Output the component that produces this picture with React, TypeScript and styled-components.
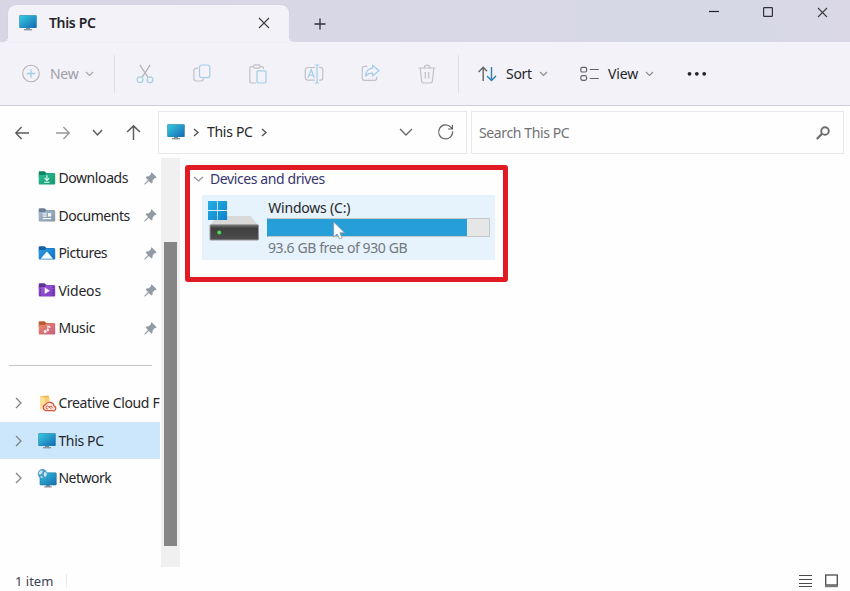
import React from "react";
import styled, { createGlobalStyle } from "styled-components";

const Global = createGlobalStyle`
  *, *::before, *::after { box-sizing: border-box; }
  body { margin: 0; background: #fefefe; font-family: "Noto Sans", "Open Sans", sans-serif; overflow: hidden; }
  svg { display: block; flex: none; overflow: visible; }
`;

const Window = styled.main`
  width: 850px;
  height: 591px;
  display: flex;
  flex-direction: column;
  background: #fefefe;
  color: #262628;
  overflow: hidden;
`;

const Label = styled.span<{ $width: number; $size?: number; $color?: string; $spacing?: number; $weight?: number }>`
  flex: none;
  width: ${(p) => p.$width}px;
  font-size: ${(p) => p.$size ?? 14}px;
  line-height: 20px;
  font-weight: ${(p) => p.$weight ?? 400};
  letter-spacing: ${(p) => p.$spacing ?? -0.3}px;
  color: ${(p) => p.$color ?? "#262628"};
  white-space: nowrap;
`;

/* Title bar */
const TitleBar = styled.header`
  height: 42px;
  flex: none;
  display: flex;
  align-items: flex-end;
  padding-left: 8px;
  background: linear-gradient(90deg, #d8d6e5, #d9d8e6 55%, #d6d8e6 85%, #dad8e6);
`;

const Tab = styled.div`
  position: relative;
  width: 281px;
  height: 37px;
  display: flex;
  align-items: center;
  padding: 0 20px 2px 11px;
  background: #f3f2f8;
  border-radius: 8px 8px 0 0;
  box-shadow: 0 0 1px #bdbccb;
  &::before, &::after {
    content: "";
    position: absolute;
    bottom: 0;
    width: 5px;
    height: 5px;
  }
  &::before { left: -5px; background: radial-gradient(circle at 0 0, transparent 5px, #f3f2f8 5px); }
  &::after { right: -5px; background: radial-gradient(circle at 100% 0, transparent 5px, #f3f2f8 5px); }
`;

const TabTitle = styled.div`
  flex: 1;
  display: flex;
  padding: 1px 0 0 12px;
`;

const NewTab = styled.div`
  width: 61px;
  height: 37px;
  display: grid;
  place-items: center;
`;

const WindowControls = styled.div`
  align-self: flex-start;
  margin-left: auto;
  display: grid;
  grid-template-columns: repeat(3, 54.5px);
  place-items: center;
  height: 24px;
`;

/* Command bar */
const CommandBar = styled.div`
  height: 64px;
  flex: none;
  display: flex;
  align-items: center;
  background: #f3f2f8;
  border-bottom: 1.5px solid #d0cfd6;
`;

const MenuButton = styled.div<{ $width: number; $inset: number }>`
  width: ${(p) => p.$width}px;
  height: 40px;
  padding-left: ${(p) => p.$inset}px;
  display: flex;
  align-items: center;
  gap: 9px;
  flex: none;
`;

const Separator = styled.i`
  width: 1px;
  height: 38px;
  background: #e1e0e7;
  flex: none;
`;

const Tools = styled.div`
  width: 343px;
  padding: 0 2.3px 0 2px;
  display: grid;
  grid-template-columns: repeat(6, 56.4px);
  justify-items: center;
`;

/* Navigation row */
const NavRow = styled.div`
  height: 52px;
  flex: none;
  display: flex;
  align-items: flex-start;
  padding-top: 5px;
`;

const NavButtons = styled.nav`
  width: 158px;
  height: 43px;
  display: flex;
  align-items: center;
  padding-left: 15px;
`;

const NavButton = styled.div<{ $width: number }>`
  width: ${(p) => p.$width}px;
  display: flex;
`;

const Field = styled.div<{ $width: number }>`
  width: ${(p) => p.$width}px;
  height: 43px;
  display: flex;
  align-items: center;
  border: 1px solid #e8e8ea;
  background: #fefefe;
`;

const AddressField = styled(Field)`
  padding: 0 12px 1px 8px;
  gap: 9px;
  margin-right: 4px;
`;

const SearchField = styled(Field)`
  padding: 0 13px 0 7px;
  justify-content: space-between;
`;

const AddressActions = styled.div`
  margin-left: auto;
  display: flex;
  align-items: center;
  gap: 26px;
`;

/* Body */
const Body = styled.div`
  flex: 1;
  min-height: 0;
  display: flex;
`;

const Sidebar = styled.aside`
  width: 161px;
  padding-top: 1.25px;
  flex: none;
`;

const SideRow = styled.div<{ $selected?: boolean }>`
  width: 160px;
  height: 37.5px;
  display: flex;
  align-items: center;
  overflow: hidden;
  background: ${(p) => (p.$selected ? "#cce6fc" : "transparent")};
`;

const ChevronSlot = styled.div`
  width: 38px;
  padding-left: 16px;
  flex: none;
`;

const IconSlot = styled.div`
  width: 20.4px;
  flex: none;
`;

const PinSlot = styled.div`
  margin: 0 3px 0 auto;
`;

const SideDivider = styled.div`
  height: 37.5px;
  padding: 18px 9px 0 9px;
  &::after {
    content: "";
    display: block;
    height: 1px;
    background: #c4c4c6;
  }
`;

const ScrollTrack = styled.div`
  width: 19px;
  height: 409px;
  flex: none;
  padding: 84px 3px 0;
  background: #f0f0f0;
`;

const ScrollThumb = styled.div`
  width: 13px;
  height: 304px;
  background: #858585;
`;

const Content = styled.section`
  position: relative;
  flex: 1;
  padding: 11px 0 0 14px;
`;

const Highlight = styled.div`
  position: absolute;
  left: 5px;
  top: 7px;
  width: 323px;
  height: 117px;
  border: 5px solid #e01b24;
  border-radius: 3px;
`;

const GroupHeader = styled.div`
  display: flex;
  align-items: center;
  gap: 7px;
  height: 20px;
`;

const DriveTile = styled.article`
  position: relative;
  width: 293px;
  height: 65px;
  margin: 6px 0 0 8px;
  padding: 3px 5px 0 5px;
  display: flex;
  background: #e6f3fd;
`;

const DriveInfo = styled.div`
  margin-left: auto;
  width: 223px;
  display: flex;
  flex-direction: column;
`;

const UsageBar = styled.div`
  width: 223px;
  height: 19px;
  margin: 0 0 1px;
  border: 1px solid #c5c7c9;
  border-left-color: #269fd9;
  background: #e6e6e7;
  &::before {
    content: "";
    display: block;
    width: 199px;
    height: 17px;
    background: #269fd9;
  }
`;

const Pointer = styled.div`
  position: absolute;
  left: 131px;
  top: 26px;
`;

const StatusBar = styled.footer`
  height: 24px;
  flex: none;
  display: flex;
  align-items: center;
  padding: 4px 12px 0 15px;
`;

const StatusDivider = styled.i`
  width: 1px;
  height: 14px;
  margin-left: 12px;
  background: #ebebed;
`;

const ViewModes = styled.div`
  margin-left: auto;
  display: flex;
  align-items: center;
  gap: 13px;
`;

type ChevronProps = { w?: number; h?: number; color?: string; stroke?: number };

const ChevronDown = ({ w = 7, h = 3.5, color = "#8b8b90", stroke = 1.1 }: ChevronProps) => (
  <svg width={w} height={h} fill="none" stroke={color} strokeWidth={stroke}>
    <path d={`M0 0L${w / 2} ${h}L${w} 0`} />
  </svg>
);

const ChevronRight = ({ w = 4, h = 7, color = "#555", stroke = 1.4 }: ChevronProps) => (
  <svg width={w} height={h} fill="none" stroke={color} strokeWidth={stroke}>
    <path d={`M0 0L${w} ${h / 2}L0 ${h}`} />
  </svg>
);

const Monitor = ({ id }: { id: string }) => (
  <svg width="18" height="16" viewBox="0 0 18 16">
    <defs>
      <linearGradient id={id} x1="0" y1="0" x2="1" y2="1">
        <stop offset="0" stopColor="#35cbe0" />
        <stop offset="1" stopColor="#1669b4" />
      </linearGradient>
    </defs>
    <path d="M7 12h4v2.5H7z" fill="#7b8c99" />
    <path d="M5 14h8v1.4H5z" fill="#8a969f" />
    <rect x=".3" y=".3" width="17.4" height="12.8" rx=".8" fill="#2482ab" />
    <rect x=".8" y=".8" width="16.4" height="11.8" fill={`url(#${id})`} />
  </svg>
);

const Cross = ({ size = 10 }: { size?: number }) => (
  <svg width={size} height={size} stroke="#3c3c41" strokeWidth="1.1">
    <path d={`M0 0L${size} ${size}M${size} 0L0 ${size}`} />
  </svg>
);

const gray = "#c0c0c6";
const blue = "#a3cee7";

const CutIcon = () => (
  <svg width="18" height="20" viewBox="0 0 18 20" fill="none" strokeWidth="1.2">
    <path d="M3.8 .8L11.8 13.2M14.2 .8L6.2 13.2" stroke="#b2b2b8" />
    <circle cx="4" cy="15.8" r="2.9" stroke={blue} />
    <circle cx="14" cy="15.8" r="2.9" stroke={blue} />
  </svg>
);

const CopyIcon = () => (
  <svg width="18" height="18" viewBox="0 0 18 18" fill="none" strokeWidth="1.2">
    <path d="M5 4.2H3.3A2.4 2.4 0 0 0 .9 6.6v8A2.4 2.4 0 0 0 3.3 17h4.8a2.4 2.4 0 0 0 2.4-2.2" stroke={gray} />
    <rect x="6.5" y="1" width="10.3" height="12.6" rx="2.2" stroke={blue} />
  </svg>
);

const PasteIcon = () => (
  <svg width="18" height="20" viewBox="0 0 18 20" fill="none" strokeWidth="1.2">
    <path d="M4.5 2.6H2.4A1.5 1.5 0 0 0 .9 4.1v13.4A1.5 1.5 0 0 0 2.4 19H7M11 2.6h2a1.5 1.5 0 0 1 1.5 1.5V5" stroke={gray} />
    <rect x="4.5" y=".9" width="6.5" height="3.2" rx="1.4" stroke={gray} />
    <rect x="8" y="6.8" width="9" height="12.2" rx="1.2" stroke={blue} />
  </svg>
);

const RenameIcon = () => (
  <svg width="20" height="20" viewBox="0 0 20 20" fill="none" strokeWidth="1.2">
    <path d="M11 3.5H4A2.8 2.8 0 0 0 1.2 6.3v7A2.8 2.8 0 0 0 4 16.1h7M15 3.5h1.5a2.3 2.3 0 0 1 2.3 2.3v8a2.3 2.3 0 0 1-2.3 2.3H15" stroke={gray} />
    <path d="M4 13.8L7.2 5.7L10.4 13.8M5.2 11.2h4M13 1v18M10.8 1h4.4M10.8 19h4.4" stroke={blue} />
  </svg>
);

const ShareIcon = () => (
  <svg width="19" height="18" viewBox="0 0 19 18" fill="none" strokeWidth="1.2" strokeLinejoin="round">
    <path d="M6.3 2.3H3.6A2.4 2.4 0 0 0 1.2 4.7v9.2a2.4 2.4 0 0 0 2.4 2.4h9.8a2.4 2.4 0 0 0 2.4-2.4v-1.2" stroke={gray} />
    <path d="M11.6 1.2L18 6.7L11.6 12V9.2C8.4 9.1 6.3 10 4.6 12.2C5 7.5 7.5 4.4 11.6 4.1Z" stroke={blue} />
  </svg>
);

const TrashIcon = () => (
  <svg width="18" height="20" viewBox="0 0 18 20" fill="none" stroke={gray} strokeWidth="1.2">
    <path d="M.5 4h17M6.2 4C6.2 .1 11.8 .1 11.8 4M2.2 4l1.4 13.1A2 2 0 0 0 5.6 19h6.8a2 2 0 0 0 2-1.9L15.8 4M7.3 8v6.5M10.7 8v6.5" />
  </svg>
);

const AddIcon = () => (
  <svg width="19" height="19" viewBox="0 0 19 19" fill="none" strokeWidth="1.1">
    <circle cx="9" cy="9.5" r="8.3" stroke="#b2b2b9" />
    <path d="M9 5.2v8.6M4.7 9.5h8.6" stroke={blue} strokeWidth="1.3" />
  </svg>
);

const SortIcon = () => (
  <svg width="19" height="16" viewBox="0 0 19 16" fill="none" strokeWidth="1.4">
    <path d="M5.2 15V1.2M.6 6L5.2 1.2L9 5.2" stroke="#626267" />
    <path d="M13.5 1v13.6M9 10l4.5 4.6L18 10" stroke="#2f7fb9" />
  </svg>
);

const ViewIcon = () => (
  <svg width="19" height="16" viewBox="0 0 19 16" fill="none" stroke="#626267" strokeWidth="1.2">
    <rect x=".8" y="1.4" width="5.8" height="4.6" rx="1.5" />
    <rect x=".8" y="9.7" width="5.8" height="4.6" rx="1.8" />
    <path d="M9.8 3.5h9M9.8 12.5h9" />
  </svg>
);

const MoreIcon = () => (
  <svg width="19" height="5" fill="#27272a">
    <circle cx="1.5" cy="2.8" r="1.9" />
    <circle cx="8.8" cy="2.8" r="1.9" />
    <circle cx="16.2" cy="2.8" r="1.9" />
  </svg>
);

const Arrow = ({ angle = 0, color = "#5c5c60", size = 14 }: { angle?: number; color?: string; size?: number }) => (
  <svg width={size} height={size} viewBox="0 0 14 14" fill="none" stroke={color} strokeWidth="1.35">
    <path d="M14 7H.8M6.6 1L.8 7l5.8 6" transform={`rotate(${angle} 7 7)`} />
  </svg>
);

const RefreshIcon = () => (
  <svg width="16" height="16" viewBox="0 0 16 16" fill="none" stroke="#66666a" strokeWidth="1.2">
    <path d="M14.6 7.2A7 7 0 1 1 12.9 3.3L14.3 5M14.4 .8V5H10" />
  </svg>
);

const SearchIcon = () => (
  <svg width="14" height="14" viewBox="0 0 14 14" fill="none" stroke="#6a6a6d">
    <circle cx="9" cy="5" r="3.8" strokeWidth="1.9" />
    <path d="M6 7.8L.8 13" strokeWidth="2.3" />
  </svg>
);

const PinIcon = () => (
  <svg width="13" height="13" viewBox="0 0 13 13" fill="#929ba3">
    <path d="M7.6 .3L12.6 5.2L11.6 6.2L10.8 5.9L8.6 8.4L8.5 10.8L7.5 11.4L4.8 8.9L1 12.6L.3 12.6L.3 11.8L4 8.1L1.6 5.5L2.3 4.5L4.8 4.3L7.1 2.1L6.8 1.2Z" />
  </svg>
);

type FolderKind = "downloads" | "documents" | "pictures" | "videos" | "music";

const folderColors: Record<FolderKind, [string, string, string]> = {
  downloads: ["#128466", "#2fbd93", "#159874"],
  documents: ["#6b8096", "#a9bccd", "#8095a9"],
  pictures: ["#15609f", "#2a9be6", "#1370be"],
  videos: ["#5e3594", "#a45ae0", "#7a3abf"],
  music: ["#bd5a34", "#e88d60", "#c45d86"],
};

const FolderGlyph = ({ kind }: { kind: FolderKind }) => {
  switch (kind) {
    case "downloads":
      return <path d="M8.7 4.5v5M6.4 7.5l2.3 2.3L11 7.5M6 11.6h5.4" fill="none" stroke="#e9fff8" strokeWidth="1.1" />;
    case "documents":
      return (
        <>
          <path d="M4.5 6.2h4M4.5 8.4h4M4.5 10.9h8.5" fill="none" stroke="#f4f8fb" strokeWidth="1.1" />
          <path d="M9.8 5.4h3.2v3.4H9.8z" fill="#f4f8fb" />
        </>
      );
    case "pictures":
      return <path d="M2.5 13L8.2 6.2a.7.7 0 0 1 1 0L14.8 13z" fill="#f5fbff" />;
    case "videos":
      return (
        <>
          <path d="M2 3.5v9.5M15.2 4v9" stroke="#512a86" strokeWidth="1.4" strokeDasharray="1.4 1.4" />
          <path d="M6.5 4.8L11.7 8L6.5 11.2z" fill="#fbf5ff" />
        </>
      );
    default:
      return (
        <g fill="#fff4f0">
          <circle cx="7" cy="10.8" r="1.5" />
          <path d="M9.2 4.6l3 1.2v1.5l-2.1-.7v3.2H9.2z" />
          <circle cx="9.6" cy="9.4" r="1.2" />
        </g>
      );
  }
};

const Folder = ({ kind }: { kind: FolderKind }) => {
  const [back, light, dark] = folderColors[kind];
  return (
    <svg width="18" height="15" viewBox="0.3 0.3 17 15">
      <defs>
        <linearGradient id={`folder-${kind}`} x1="0" y1="0" x2="1" y2="1">
          <stop offset="0" stopColor={light} />
          <stop offset="1" stopColor={dark} />
        </linearGradient>
      </defs>
      <path d="M1.5 .5h4.8l2 1.8h8v4H.5V1.5a1 1 0 0 1 1-1z" fill={back} />
      <path d="M.5 4.2h6L8.3 2.6H16a1 1 0 0 1 1 1v9.2a1 1 0 0 1-1 1H1.5a1 1 0 0 1-1-1z" fill={`url(#folder-${kind})`} />
      <FolderGlyph kind={kind} />
    </svg>
  );
};

const CreativeCloudIcon = () => (
  <svg width="18" height="17" viewBox="1 0 18 17">
    <path d="M3 1.2L11 .6q1 0 1 1V14H3z" fill="#eebd58" />
    <path d="M3 1.2L8 3v12.6L3 14z" fill="#ffe09a" />
    <path d="M8 3q3-1 4.5 0v7L8 13z" fill="#f9ce72" />
    <g fill="#fbe7dd" stroke="#d6503d" strokeWidth="1.2">
      <path d="M9 15.6a3 3 0 0 1-.4-5.9 4.6 4.6 0 0 1 8.6 1.4 2.3 2.3 0 0 1-1.8 4.5z" />
      <path d="M14.3 13.8l-3-2.4a1.4 1.4 0 1 0-.4 2.4M12 12.2q2.8-2.2 3.2.6" fill="none" strokeWidth="1" />
    </g>
  </svg>
);

const NetworkIcon = () => (
  <svg width="19" height="19" viewBox="0 0 19 19">
    <defs>
      <linearGradient id="network-screen" x1="0" y1="0" x2="1" y2="1">
        <stop offset="0" stopColor="#35c5dc" />
        <stop offset="1" stopColor="#176cb1" />
      </linearGradient>
    </defs>
    <path d="M8 15h4v3H8zM6.3 17.2h7.5v1.4H6.3z" fill="#82919d" />
    <rect x="2" y="3.8" width="16.3" height="12.2" rx=".8" fill="url(#network-screen)" stroke="#19739f" strokeWidth=".6" />
    <circle cx="4.5" cy="4.8" r="4.8" fill="#4d9ec8" />
    <path d="M1.5 2.5Q3.5 .8 4.7 1.8L4.1 4 2.1 5.8 .5 4.6zM6.3 3l2.4.8v2.4L6.9 8 5.7 6zM2.5 7l2 .8v1.3l-1.6-.4z" fill="#d2e9ef" />
  </svg>
);

const DriveIcon = () => (
  <svg width="53" height="44" viewBox="0 0 53 44">
    <defs>
      <linearGradient id="drive-front" x1="0" y1="0" x2="0" y2="1">
        <stop offset="0" stopColor="#6c6c6c" />
        <stop offset=".25" stopColor="#3f3f40" />
        <stop offset="1" stopColor="#4e4e4f" />
      </linearGradient>
      <linearGradient id="logo-tile" x1="0" y1="0" x2="1" y2="1">
        <stop offset="0" stopColor="#27aee2" />
        <stop offset="1" stopColor="#0c83cf" />
      </linearGradient>
    </defs>
    <path d="M10 18h33.5L51.3 27.5H3z" fill="#d9d9da" />
    <rect x="3" y="26.8" width="48.5" height="15.2" rx=".8" fill="url(#drive-front)" stroke="#959697" strokeWidth="1" />
    <circle cx="12.2" cy="34.6" r="2" fill="#48dd51" />
    <path d="M1 3h9.2v9.1H1zM11 3h9.1v9.1H11zM1 12.9h9.2v9.1H1zM11 12.9h9.1v9.1H11z" fill="url(#logo-tile)" />
  </svg>
);

const PointerIcon = () => (
  <svg width="12" height="19" viewBox="0 0 12 19">
    <path d="M.7 1v15l3.4-3 2.4 5 2.7-1.2-2.3-5h4.7z" fill="#fff" stroke="#8b9298" strokeWidth=".8" />
  </svg>
);

const quickAccess: { name: string; kind: FolderKind; spacing: number }[] = [
  { name: "Downloads", kind: "downloads", spacing: -0.4 },
  { name: "Documents", kind: "documents", spacing: -0.45 },
  { name: "Pictures", kind: "pictures", spacing: -0.5 },
  { name: "Videos", kind: "videos", spacing: -0.2 },
  { name: "Music", kind: "music", spacing: -0.35 },
];

const places: { name: string; icon: React.ReactNode; selected?: boolean; spacing: number }[] = [
  { name: "Creative Cloud F", icon: <CreativeCloudIcon />, spacing: -0.35 },
  { name: "This PC", icon: <Monitor id="monitor-side" />, selected: true, spacing: -0.35 },
  { name: "Network", icon: <NetworkIcon />, spacing: -0.5 },
];

const tools = [CutIcon, CopyIcon, PasteIcon, RenameIcon, ShareIcon, TrashIcon];

export default function App() {
  return (
    <>
      <Global />
      <Window>
        <TitleBar>
          <Tab>
            <Monitor id="monitor-tab" />
            <TabTitle>
              <Label $width={60} $weight={600} $size={14} $spacing={-0.35} $color="#242427">This PC</Label>
            </TabTitle>
            <Cross size={10} />
          </Tab>
          <NewTab>
            <svg width="12" height="12" stroke="#303034" strokeWidth="1.3">
              <path d="M6 .5v11M.5 6h11" />
            </svg>
          </NewTab>
          <WindowControls>
            <svg width="10" height="2"><path d="M0 .5h10" stroke="#222226" strokeWidth="1.2" /></svg>
            <svg width="10" height="10"><rect x=".6" y=".6" width="8.8" height="8.8" rx=".6" fill="none" stroke="#333338" strokeWidth="1.2" /></svg>
            <Cross size={9} />
          </WindowControls>
        </TitleBar>

        <CommandBar>
          <MenuButton $width={114} $inset={22}>
            <AddIcon />
            <Label $width={27} $color="#a0a0a6">New</Label>
            <ChevronDown color="#a5a5ab" />
          </MenuButton>
          <Separator />
          <Tools>{tools.map((Tool, i) => <Tool key={i} />)}</Tools>
          <Separator />
          <MenuButton $width={102} $inset={19}>
            <SortIcon />
            <Label $width={25}>Sort</Label>
            <ChevronDown />
          </MenuButton>
          <MenuButton $width={127} $inset={19}>
            <ViewIcon />
            <Label $width={29} $spacing={-0.15}>View</Label>
            <ChevronDown />
          </MenuButton>
          <MoreIcon />
        </CommandBar>

        <NavRow>
          <NavButtons>
            <NavButton $width={41}><Arrow /></NavButton>
            <NavButton $width={37}><Arrow angle={180} color="#98989c" /></NavButton>
            <NavButton $width={33}><ChevronDown w={9} h={5} color="#5c5c60" stroke={1.5} /></NavButton>
            <NavButton $width={20}><Arrow angle={90} size={15} /></NavButton>
          </NavButtons>
          <AddressField $width={309}>
            <Monitor id="monitor-address" />
            <ChevronRight />
            <Label $width={46}>This PC</Label>
            <ChevronRight />
            <AddressActions>
              <ChevronDown w={12} h={6} color="#66666a" stroke={1.25} />
              <RefreshIcon />
            </AddressActions>
          </AddressField>
          <SearchField $width={373}>
            <Label $width={110} $spacing={-0.38} $color="#717175">Search This PC</Label>
            <SearchIcon />
          </SearchField>
        </NavRow>

        <Body>
          <Sidebar>
            {quickAccess.map((item) => (
              <SideRow key={item.name}>
                <ChevronSlot />
                <IconSlot><Folder kind={item.kind} /></IconSlot>
                <Label $width={75} $spacing={item.spacing}>{item.name}</Label>
                <PinSlot><PinIcon /></PinSlot>
              </SideRow>
            ))}
            <SideDivider />
            {places.map((item) => (
              <SideRow key={item.name} $selected={item.selected}>
                <ChevronSlot><ChevronRight w={5} h={10} color="#828286" stroke={1.3} /></ChevronSlot>
                <IconSlot>{item.icon}</IconSlot>
                <Label $width={101} $spacing={item.spacing}>{item.name}</Label>
              </SideRow>
            ))}
          </Sidebar>
          <ScrollTrack><ScrollThumb /></ScrollTrack>
          <Content>
            <GroupHeader>
              <ChevronDown w={9} h={4} color="#8e8e98" />
              <Label $width={130} $spacing={-0.4} $color="#36366c">Devices and drives</Label>
            </GroupHeader>
            <DriveTile>
              <DriveIcon />
              <DriveInfo>
                <Label $width={200} $spacing={-0.2}>&#8202;Windows (C:)</Label>
                <UsageBar />
                <Label $width={200} $spacing={-0.4} $color="#73787c">&#8202;93.6 GB free of 930 GB</Label>
              </DriveInfo>
              <Pointer><PointerIcon /></Pointer>
            </DriveTile>
            <Highlight />
          </Content>
        </Body>

        <StatusBar>
          <Label $width={39} $size={13} $spacing={0} $color="#3c4350">1 item</Label>
          <StatusDivider />
          <ViewModes>
            <svg width="13" height="13" stroke="#4b4b4f" strokeWidth="1.2">
              <path d="M0 .5h13M0 4.5h13M0 8.5h13M0 11.5h13" />
            </svg>
            <svg width="13" height="14" viewBox="0 0 13 14" fill="none" stroke="#4b4b4f">
              <rect x=".7" y="1" width="11.6" height="10" strokeWidth="1.3" />
              <path d="M0 12h13" strokeWidth="2.4" stroke="#77777b" />
            </svg>
          </ViewModes>
        </StatusBar>
      </Window>
    </>
  );
}
